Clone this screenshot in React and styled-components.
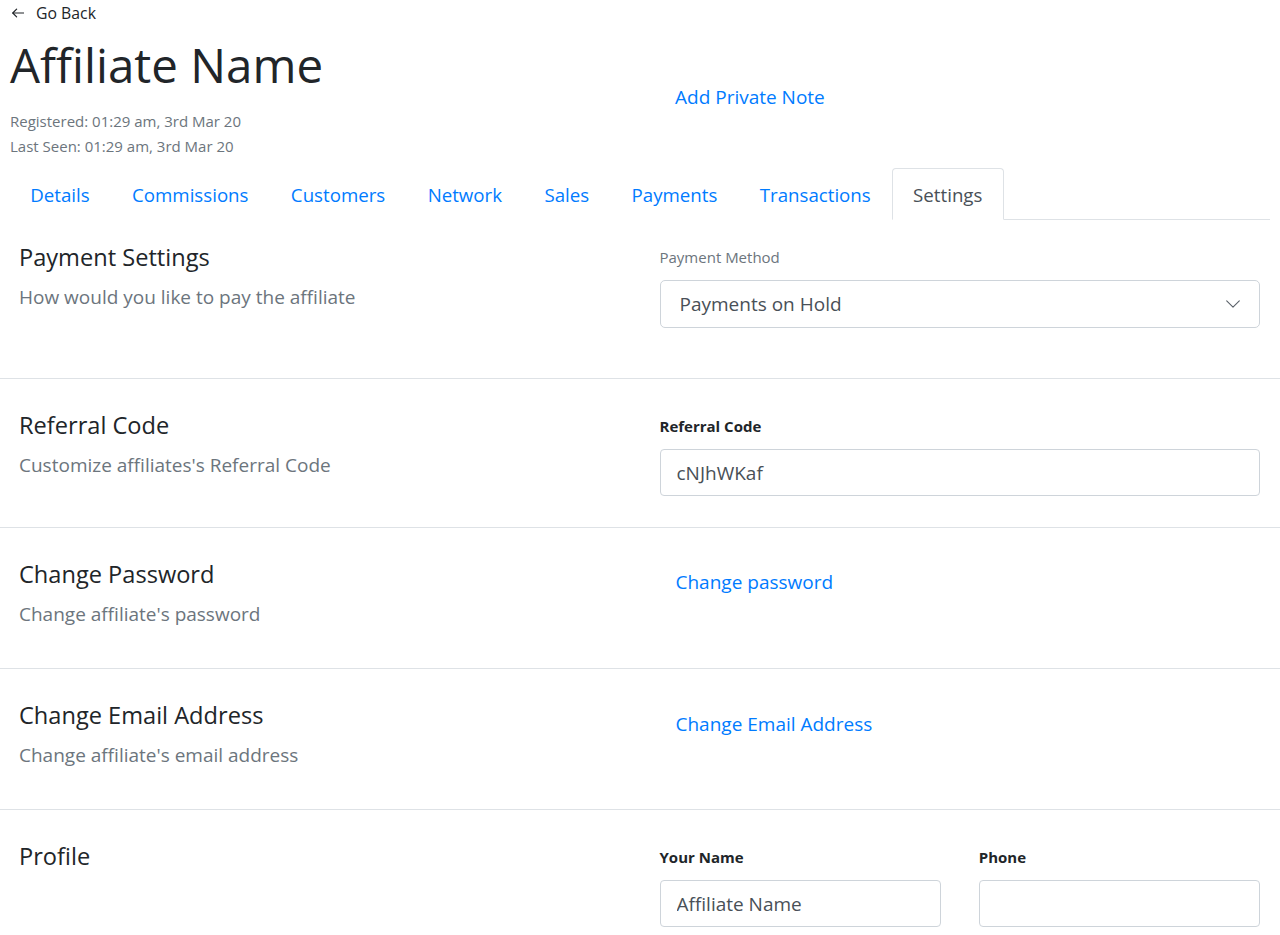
import React from 'react';
import styled, { createGlobalStyle } from 'styled-components';

const GlobalStyle = createGlobalStyle`
  * { box-sizing: border-box; }
  body {
    margin: 0;
    background: #fff;
    font-family: "Open Sans", "Noto Sans", sans-serif;
    color: #212529;
  }
`;

const Page = styled.div`
  width: 1280px;
`;

const Header = styled.header`
  display: grid;
  grid-template-columns: 649px 1fr;
  padding-left: 10px;
`;

const HeaderMain = styled.div`
  display: flex;
  flex-direction: column;
`;

const BackLink = styled.a`
  display: flex;
  align-items: center;
  gap: 12px;
  height: 26px;
  margin-left: 2px;
  font-size: 15.8px;
  color: #212529;
  text-decoration: none;
  cursor: pointer;
`;

const Title = styled.h1`
  margin: 11px 0 0;
  font-size: 47.5px;
  font-weight: 400;
  line-height: 56px;
  color: #212529;
`;

const Meta = styled.div`
  margin-top: 16px;
  display: flex;
  flex-direction: column;
`;

const MetaLine = styled.span`
  font-size: 15px;
  line-height: 25px;
  color: #6c757d;
`;

const HeaderSide = styled.div`
  padding-top: 83px;
`;

const TextLink = styled.a`
  display: inline-block;
  padding: ${(p) => p.$pad || '0 16px'};
  font-size: 19px;
  line-height: 28px;
  color: #007bff;
  text-decoration: none;
  cursor: pointer;
`;

const Tabs = styled.nav`
  display: flex;
  margin: 9px 10px 0 9px;
  border-bottom: 1px solid #dee2e6;
`;

const Tab = styled.a`
  display: block;
  margin-bottom: -1px;
  padding: 12px 20.2px 11px;
  font-size: 18.7px;
  line-height: 27px;
  border: 1px solid transparent;
  border-top-left-radius: 4px;
  border-top-right-radius: 4px;
  color: ${(p) => (p.$active ? '#495057' : '#007bff')};
  background: #fff;
  text-decoration: none;
  cursor: pointer;
  ${(p) => p.$active && 'border-color: #dee2e6 #dee2e6 #fff;'}
`;

const Section = styled.section`
  display: grid;
  grid-template-columns: 1fr 1fr;
  column-gap: 40px;
  align-items: start;
  padding: ${(p) => p.$pt}px 20px ${(p) => p.$pb}px 19px;
  border-bottom: ${(p) => (p.$last ? 'none' : '1px solid #dee2e6')};
`;

const SectionInfo = styled.div`
  display: flex;
  flex-direction: column;
  margin-top: 1px;
`;

const SectionTitle = styled.h2`
  margin: 0;
  font-size: 23.6px;
  font-weight: 400;
  line-height: 28px;
  color: #212529;
`;

const SectionHint = styled.p`
  margin: 12px 0 0;
  font-size: 19px;
  line-height: 28px;
  color: #6c757d;
`;

const FieldRow = styled.div`
  display: grid;
  grid-template-columns: 1fr 1fr;
  column-gap: 38px;
`;

const Field = styled.label`
  display: flex;
  flex-direction: column;
`;

const FieldLabel = styled.span`
  margin-top: ${(p) => (p.$strong ? '2px' : '1px')};
  font-size: 15px;
  line-height: 28px;
  font-weight: ${(p) => (p.$strong ? 700 : 400)};
  color: ${(p) => (p.$strong ? '#212529' : '#6c757d')};
`;

const Input = styled.input`
  margin-top: 9px;
  width: 100%;
  height: 47px;
  padding: 0 16px;
  font-family: inherit;
  font-size: 19px;
  color: #495057;
  border: 1px solid #ced4da;
  border-radius: 4px;
  background: #fff;
  outline: none;
`;

const SelectBox = styled.div`
  margin-top: 9px;
  height: 48px;
  display: flex;
  align-items: center;
  padding: 0 19px 0 19px;
  border: 1px solid #ced4da;
  border-radius: 5px;
  background: #fff;
  font-size: 19px;
  color: #495057;
`;

const SelectValue = styled.span`
  flex: 1;
`;

const ArrowLeft = () => (
  <svg width="12" height="10" viewBox="0 0 12 10" fill="none" stroke="#212529" strokeWidth="1.2" strokeLinecap="round" strokeLinejoin="round">
    <path d="M11.5 5H0.8" />
    <path d="M4.6 1.2L0.8 5l3.8 3.8" />
  </svg>
);

const Chevron = () => (
  <svg width="14" height="8" viewBox="0 0 14 8" fill="none" stroke="#5a6169" strokeWidth="1.1" strokeLinecap="round" strokeLinejoin="round">
    <path d="M0.7 0.8L7 7.2l6.3-6.4" />
  </svg>
);

const tabs = ['Details', 'Commissions', 'Customers', 'Network', 'Sales', 'Payments', 'Transactions', 'Settings'];

export default function App() {
  return (
    <Page>
      <GlobalStyle />
      <Header>
        <HeaderMain>
          <BackLink>
            <ArrowLeft />
            <span>Go Back</span>
          </BackLink>
          <Title>Affiliate Name</Title>
          <Meta>
            <MetaLine>Registered: 01:29 am, 3rd Mar 20</MetaLine>
            <MetaLine>Last Seen: 01:29 am, 3rd Mar 20</MetaLine>
          </Meta>
        </HeaderMain>
        <HeaderSide>
          <TextLink>Add Private Note</TextLink>
        </HeaderSide>
      </Header>

      <Tabs>
        {tabs.map((t) => (
          <Tab key={t} $active={t === 'Settings'}>
            {t}
          </Tab>
        ))}
      </Tabs>

      <Section $pt={22} $pb={50}>
        <SectionInfo>
          <SectionTitle>Payment Settings</SectionTitle>
          <SectionHint>How would you like to pay the affiliate</SectionHint>
        </SectionInfo>
        <Field as="div">
          <FieldLabel>Payment Method</FieldLabel>
          <SelectBox>
            <SelectValue>Payments on Hold</SelectValue>
            <Chevron />
          </SelectBox>
        </Field>
      </Section>

      <Section $pt={31} $pb={31}>
        <SectionInfo>
          <SectionTitle>Referral Code</SectionTitle>
          <SectionHint>Customize affiliates's Referral Code</SectionHint>
        </SectionInfo>
        <Field>
          <FieldLabel $strong>Referral Code</FieldLabel>
          <Input defaultValue="cNJhWKaf" />
        </Field>
      </Section>

      <Section $pt={31} $pb={40}>
        <SectionInfo>
          <SectionTitle>Change Password</SectionTitle>
          <SectionHint>Change affiliate's password</SectionHint>
        </SectionInfo>
        <div>
          <TextLink $pad="9px 16px">Change password</TextLink>
        </div>
      </Section>

      <Section $pt={31} $pb={40}>
        <SectionInfo>
          <SectionTitle>Change Email Address</SectionTitle>
          <SectionHint>Change affiliate's email address</SectionHint>
        </SectionInfo>
        <div>
          <TextLink $pad="10px 16px 8px">Change Email Address</TextLink>
        </div>
      </Section>

      <Section $pt={31} $pb={31} $last>
        <SectionInfo>
          <SectionTitle>Profile</SectionTitle>
        </SectionInfo>
        <FieldRow>
          <Field>
            <FieldLabel $strong>Your Name</FieldLabel>
            <Input defaultValue="Affiliate Name" />
          </Field>
          <Field>
            <FieldLabel $strong>Phone</FieldLabel>
            <Input defaultValue="" />
          </Field>
        </FieldRow>
      </Section>
    </Page>
  );
}
